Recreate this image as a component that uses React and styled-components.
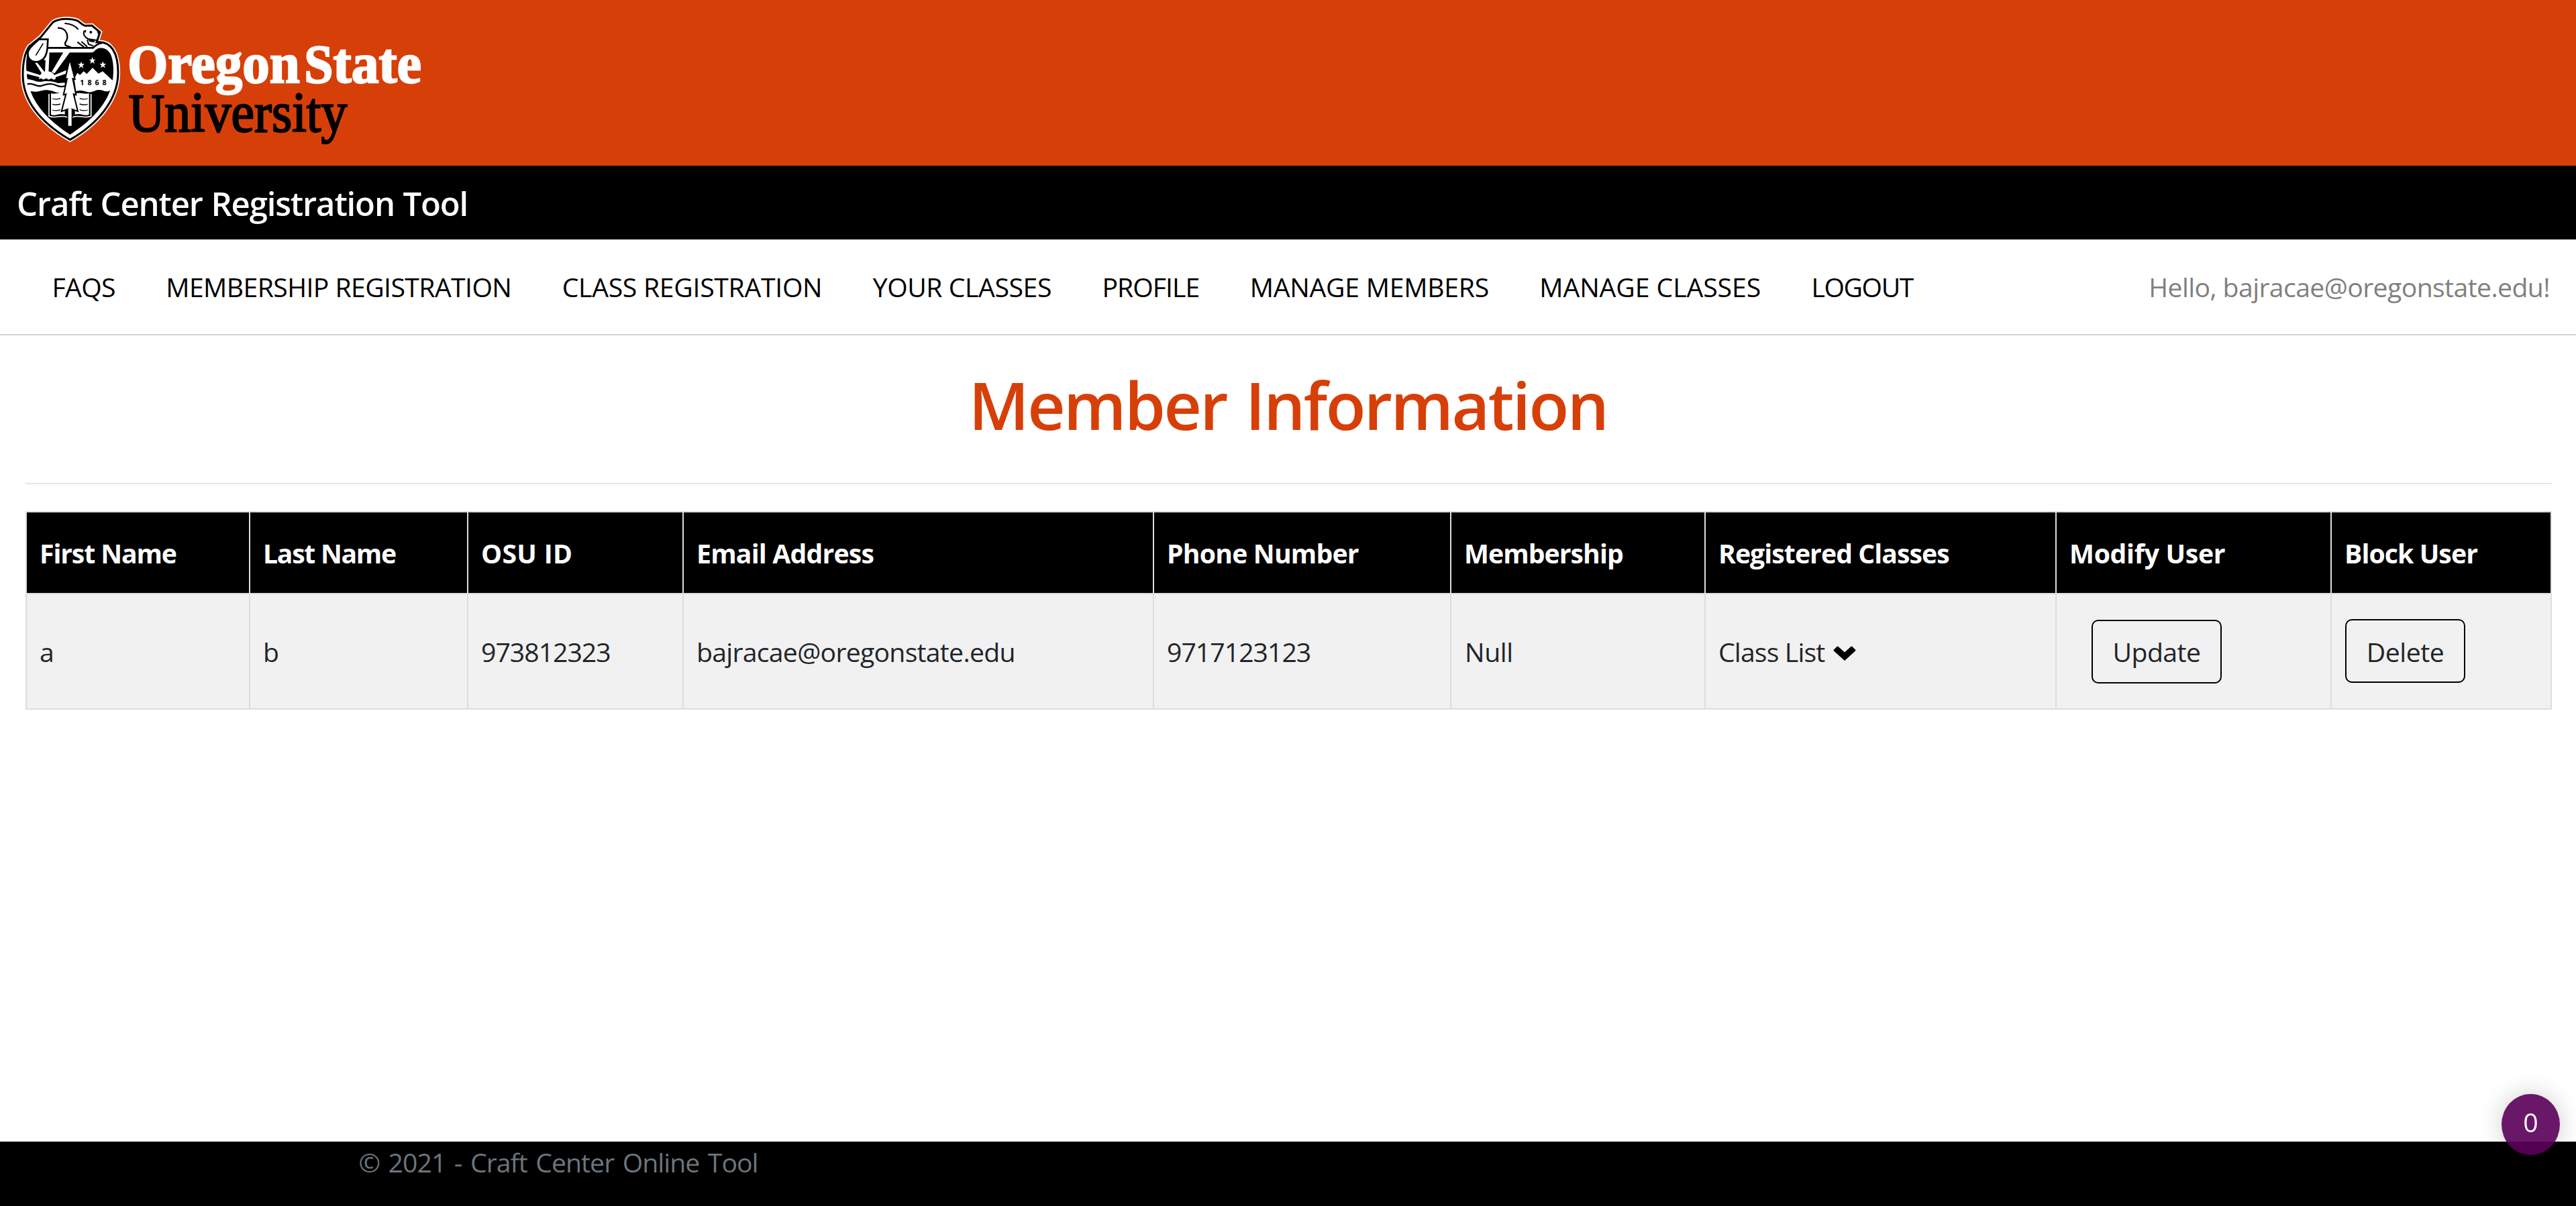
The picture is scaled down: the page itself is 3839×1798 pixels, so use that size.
import React from "react";
import styled, { createGlobalStyle } from "styled-components";

const GlobalStyle = createGlobalStyle`
  * { box-sizing: border-box; }
  body {
    margin: 0;
    background: #fff;
    color: #212529;
    font-family: "Open Sans", "Noto Sans", sans-serif;
    font-size: 39.2px;
    line-height: 60px;
  }
`;

const Page = styled.div`
  display: flex;
  flex-direction: column;
  min-height: 100vh;
`;

const Banner = styled.header`
  display: flex;
  height: 247px;
  background: #d73f09;
`;

const Logo = styled.svg`
  display: block;
  width: 660px;
  height: 247px;
`;

const Wordmark = styled.text`
  font-family: "Liberation Serif", "Times New Roman", serif;
  font-weight: ${(p) => p.$weight};
  font-size: 256px;
  fill: ${(p) => p.$color};
  stroke: ${(p) => p.$color};
  stroke-width: 7px;
`;

const Capital = styled.tspan`
  font-size: 244px;
`;

const Year = styled.text`
  font-family: "Open Sans", sans-serif;
  font-weight: 700;
  font-size: 32px;
  fill: #000;
`;

const TitleBar = styled.div`
  height: 110px;
  padding: 18px 24px 0 25px;
  background: #000;
  color: #fff;
  font-size: 49px;
  font-weight: 600;
  line-height: 76px;
  letter-spacing: -1.15px;
  word-spacing: 1px;
`;

const Nav = styled.nav`
  display: flex;
  justify-content: space-between;
  height: 143px;
  padding: 41px 39px 0 77.4px;
  border-bottom: 2px solid #d3d3d3;
`;

const NavList = styled.div`
  display: flex;
  gap: 75.4px;
`;

const NavLink = styled.a`
  color: #000;
  white-space: nowrap;
  letter-spacing: ${(p) => p.$track}px;
`;

const Greeting = styled.span`
  color: #808080;
  white-space: nowrap;
  letter-spacing: -0.61px;
`;

const Main = styled.main`
  display: flex;
  flex-direction: column;
  flex: 1;
  padding: 43px 36px 0 38px;
`;

const Heading = styled.h1`
  margin: 0 0 57px;
  padding-right: 2px;
  color: #d73f09;
  font-size: 98px;
  font-weight: 600;
  line-height: 120px;
  letter-spacing: -2.6px;
  word-spacing: 5px;
  text-align: center;
`;

const Divider = styled.hr`
  width: 100%;
  height: 2px;
  margin: 0 0 40px;
  border: 0;
  background: #e5e5e5;
`;

const Table = styled.table`
  width: 3765px;
  table-layout: fixed;
  border-collapse: collapse;
`;

const Col = styled.col`
  width: ${(p) => p.$w}px;
`;

const HeadCell = styled.th`
  height: 122px;
  padding: 31px 0 0 19px;
  border: 2px solid #dcdddd;
  background: #000;
  color: #fff;
  font-weight: 700;
  text-align: left;
  vertical-align: top;
  white-space: nowrap;
  letter-spacing: ${(p) => p.$track}px;
`;

const Cell = styled.td`
  height: 172px;
  padding: ${(p) => p.$top || 56}px 0 0 ${(p) => p.$left || 19}px;
  border: 2px solid #dcdddd;
  background: #f1f1f1;
  vertical-align: top;
  white-space: nowrap;
  letter-spacing: ${(p) => p.$track || 0}px;
`;

const Chevron = styled.svg`
  width: 34px;
  height: 22px;
  margin-left: 13px;
  vertical-align: 2px;
  fill: #000;
`;

const Button = styled.button`
  display: block;
  width: ${(p) => p.$w}px;
  height: 95px;
  padding: ${(p) => p.$drop || 0}px 0 0;
  border: 2px solid #000;
  border-radius: 10px;
  background: transparent;
  color: inherit;
  font: inherit;
  letter-spacing: ${(p) => p.$track}px;
`;

const Footer = styled.footer`
  height: 96px;
  padding: 1px 0 0 534.5px;
  background: #000;
  color: #6c757d;
  letter-spacing: -0.95px;
  word-spacing: 3.2px;
`;

const Counter = styled.div`
  position: fixed;
  right: 24px;
  bottom: 76px;
  display: flex;
  justify-content: center;
  width: 87px;
  height: 91px;
  padding-top: 12px;
  border-radius: 50%;
  background: rgba(90, 0, 90, 0.91);
  box-shadow: 0 0 36px rgba(0, 0, 0, 0.2);
  color: #fff;
`;

const links = [
  ["FAQS", -0.63],
  ["MEMBERSHIP REGISTRATION", -0.59],
  ["CLASS REGISTRATION", -0.3],
  ["YOUR CLASSES", -0.43],
  ["PROFILE", -0.95],
  ["MANAGE MEMBERS", -0.26],
  ["MANAGE CLASSES", -0.08],
  ["LOGOUT", -1.44],
];

const columns = [
  ["First Name", 333, -1.13],
  ["Last Name", 325, -1.32],
  ["OSU ID", 321, 0.3],
  ["Email Address", 701, -0.82],
  ["Phone Number", 443, -0.81],
  ["Membership", 379, -0.96],
  ["Registered Classes", 523, -0.95],
  ["Modify User", 410, -0.3],
  ["Block User", 328, -0.92],
];

const SHIELD =
  "M313 625 C200 558 102 462 102 335 C102 270 112 235 130 208 L182 166 L236 100 C262 82 315 80 345 92 C362 100 370 118 386 115 L411 114 L447 144 L432 189 C497 182 528 236 528 325 C528 450 433 556 313 625 Z";

const STAR = "M0 -16 L4 -5 L15 -5 L6 2 L10 14 L0 7 L-10 14 L-6 2 L-15 -5 L-4 -5 Z";

function BrandLogo() {
  return (
    <Logo viewBox="0 0 1980 741" role="img" aria-label="Oregon State University">
      <path d={SHIELD} fill="#fff" stroke="#fff" strokeWidth="19" />
      <path d={SHIELD} fill="#fff" stroke="#000" strokeWidth="9" />
      {/* shield field */}
      <path
        d="M120 250 C112 300 120 380 148 435 C183 505 248 560 313 602 C380 560 448 500 482 430 C508 380 512 310 502 265 C494 228 472 212 444 215 C425 218 424 234 408 235 L215 235 L205 270 Z"
        fill="#000"
      />
      {/* sun and rays */}
      <g fill="#fff">
        <path d="M205 234 L221 234 L217 325 L201 325 Z" />
        <path d="M283 234 L312 234 L244 328 L231 322 Z" />
        <path d="M148 268 L163 276 L199 322 L188 330 Z" />
        <path d="M116 316 L182 337 L177 345 L117 330 Z" />
        <path d="M296 314 L296 329 L247 346 L241 337 Z" />
        <path d="M174 354 C178 328 192 319 210 319 C232 319 244 330 250 352 L240 357 L230 350 L218 356 L206 350 L194 356 L184 350 Z" />
        <path d="M119 354 C145 354 158 366 180 366 C205 360 240 362 258 372 L290 370 L290 414 C262 424 245 406 212 403 C185 400 170 418 130 406 Z" />
      </g>
      <g fill="none" stroke="#000" strokeWidth="7">
        <path d="M122 376 C150 369 160 389 184 384 C214 374 232 371 255 383 C268 389 280 389 292 384" />
      </g>
      {/* mountains */}
      <path
        d="M332 352 L346 326 L358 335 L374 319 L388 331 L414 303 L440 329 L459 319 L506 362 L493 404 C472 416 458 400 440 402 C420 404 412 416 392 412 C374 406 362 402 340 408 Z"
        fill="#fff"
      />
      <g fill="#fff">
        <path d={STAR} transform="translate(363 291)" />
        <path d={STAR} transform="translate(413 271)" />
        <path d={STAR} transform="translate(460 290)" />
      </g>
      <Year x="358" y="380" textLength="118">1868</Year>
      {/* open book */}
      <g fill="#fff">
        <path d="M228 417 C245 424 265 410 290 420 L290 512 C265 504 245 522 228 512 Z" />
        <path d="M398 417 C380 424 360 410 335 420 L335 512 C360 504 380 522 398 512 Z" />
      </g>
      <g fill="none" stroke="#fff" strokeWidth="5">
        <path d="M219 420 L219 520 C245 532 270 512 300 524" />
        <path d="M407 420 L407 520 C380 532 355 512 325 524" />
      </g>
      <g fill="none" stroke="#000" strokeWidth="4">
        <path d="M234 441 q16 6 36 -1 M234 466 q16 6 36 -1 M234 492 q16 6 36 -1" />
        <path d="M392 441 q-16 6 -36 -1 M392 466 q-16 6 -36 -1 M392 492 q-16 6 -36 -1" />
      </g>
      {/* fir tree */}
      <path
        d="M312 264 L291 354 L300 352 L284 424 L295 421 L275 498 L305 488 L305 563 L320 563 L320 488 L348 498 L329 421 L340 424 L325 352 L335 354 Z"
        fill="#fff"
        stroke="#000"
        strokeWidth="6"
      />
      <path d="M305 486 L320 486 L320 563 L305 563 Z" fill="#fff" />
      {/* beaver on the ledge */}
      <g fill="none" stroke="#000">
        <path d="M212 214 L416 214 C428 202 440 194 456 192" strokeWidth="8" />
        <path d="M258 125 C302 124 310 168 291 192 L293 203 L318 212" strokeWidth="7" />
        <path d="M289 104 C315 106 338 116 350 132" strokeWidth="6" />
        <path d="M376 140 C370 154 380 168 394 174 L432 180" strokeWidth="6" />
        <path d="M346 188 L376 211 M364 186 L390 209 M390 178 L396 198 L418 206" strokeWidth="6" />
      </g>
      <path d="M372 137 L386 134 L383 147 Z M432 132 L447 142 L438 154 Z M394 176 L426 182 L420 190 L400 186 Z" fill="#000" />
      <circle cx="406" cy="144" r="6" fill="#000" />
      {/* tail */}
      <path
        d="M174 176 L214 176 L212 215 C208 246 200 272 164 277 C138 277 120 260 125 232 C132 208 160 192 174 176 Z"
        fill="#fff"
        stroke="#000"
        strokeWidth="8"
      />
      <path d="M193 194 L160 248" stroke="#000" strokeWidth="5" />
      <Wordmark x="571" y="369" textLength="769" lengthAdjust="spacingAndGlyphs" $weight={700} $color="#fff">
        <Capital>O</Capital>regon
      </Wordmark>
      <Wordmark x="1360" y="369" textLength="524" lengthAdjust="spacingAndGlyphs" $weight={700} $color="#fff">
        <Capital>S</Capital>tate
      </Wordmark>
      <Wordmark x="575" y="589" textLength="977" lengthAdjust="spacingAndGlyphs" $weight={400} $color="#000">
        <Capital>U</Capital>niversity
      </Wordmark>
    </Logo>
  );
}

export default function App() {
  return (
    <Page>
      <GlobalStyle />
      <Banner>
        <BrandLogo />
      </Banner>
      <TitleBar>Craft Center Registration Tool</TitleBar>
      <Nav>
        <NavList>
          {links.map(([label, track]) => (
            <NavLink key={label} $track={track}>{label}</NavLink>
          ))}
        </NavList>
        <Greeting>Hello, bajracae@oregonstate.edu!</Greeting>
      </Nav>
      <Main>
        <Heading>Member Information</Heading>
        <Divider />
        <Table>
          <colgroup>
            {columns.map(([label, width]) => (
              <Col key={label} $w={width} />
            ))}
          </colgroup>
          <thead>
            <tr>
              {columns.map(([label, , track]) => (
                <HeadCell key={label} $track={track}>{label}</HeadCell>
              ))}
            </tr>
          </thead>
          <tbody>
            <tr>
              <Cell>a</Cell>
              <Cell>b</Cell>
              <Cell $track={-1.0}>973812323</Cell>
              <Cell $track={-0.73}>bajracae@oregonstate.edu</Cell>
              <Cell $track={-0.98}>9717123123</Cell>
              <Cell $left={20} $track={-0.38}>Null</Cell>
              <Cell $track={-0.85}>
                Class List
                <Chevron viewBox="0 0 34 22">
                  <path d="M17 22 L1 7.6 Q0 6.6 1 5.6 L5.6 1 Q6.6 0 7.6 1 L17 9.6 L26.4 1 Q27.4 0 28.4 1 L33 5.6 Q34 6.6 33 7.6 Z" />
                </Chevron>
              </Cell>
              <Cell $top={38} $left={52}>
                <Button $w={194} $track={-0.57}>Update</Button>
              </Cell>
              <Cell $top={37} $left={20}>
                <Button $w={179} $track={-0.46} $drop={2}>Delete</Button>
              </Cell>
            </tr>
          </tbody>
        </Table>
      </Main>
      <Footer>© 2021 - Craft Center Online Tool</Footer>
      <Counter>0</Counter>
    </Page>
  );
}
